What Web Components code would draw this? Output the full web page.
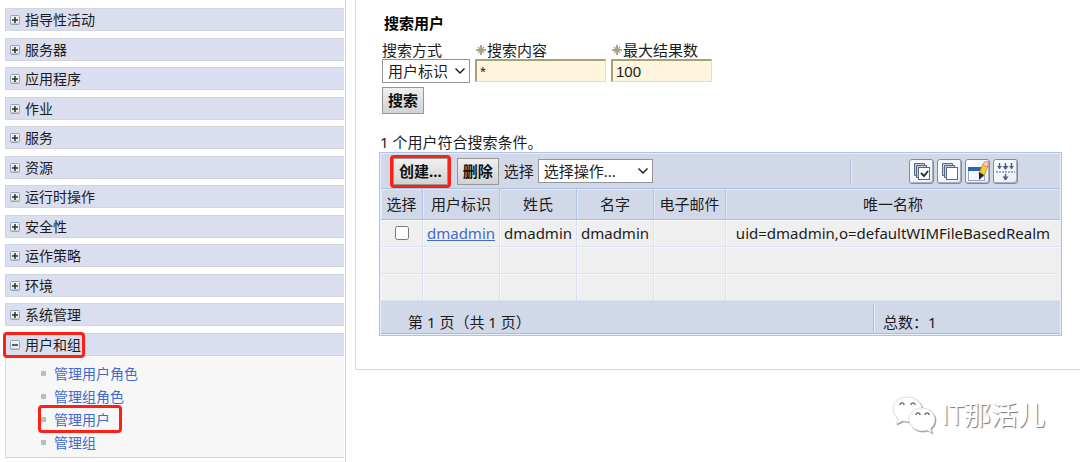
<!DOCTYPE html>
<html lang="zh-CN">
<head>
<meta charset="UTF-8">
<title>管理用户</title>
<style>
    body {
        margin: 0;
        background: #fff;
        color: #1c1c1c;
        font-family: "Noto Sans", "Noto Sans CJK SC", sans-serif;
        font-size: 15px;
    }
</style>
</head>
<body>
<console-page>
    <side-nav slot="nav">
        <nav-group label="指导性活动"></nav-group>
        <nav-group label="服务器"></nav-group>
        <nav-group label="应用程序"></nav-group>
        <nav-group label="作业"></nav-group>
        <nav-group label="服务"></nav-group>
        <nav-group label="资源"></nav-group>
        <nav-group label="运行时操作"></nav-group>
        <nav-group label="安全性"></nav-group>
        <nav-group label="运作策略"></nav-group>
        <nav-group label="环境"></nav-group>
        <nav-group label="系统管理"></nav-group>
        <nav-group label="用户和组" open marked>
            <nav-link>管理用户角色</nav-link>
            <nav-link>管理组角色</nav-link>
            <nav-link marked>管理用户</nav-link>
            <nav-link>管理组</nav-link>
        </nav-group>
    </side-nav>
    <search-form></search-form>
    <user-table></user-table>
    <page-watermark slot="watermark">IT那活儿</page-watermark>
</console-page>

<script>
// Общая база: создаёт открытый shadow root и вставляет разметку
class BaseElement extends HTMLElement {
    connectedCallback() {
        if (!this.shadowRoot) {
            this.attachShadow({ mode: 'open' });
        }
        this.shadowRoot.innerHTML = this.render();
    }
}

// Стили выпадающего списка, общие для формы и таблицы
const SELECT_STYLES = `
    .select {
        display: grid;
        align-items: center;
    }

    .select > * {
        grid-area: 1 / 1;
    }

    .select svg {
        justify-self: end;
        margin-right: 4px;
        pointer-events: none;
    }

    select {
        appearance: none;
        box-sizing: border-box;
        height: 24px;
        padding: 0 5px;
        border: 1px solid #959595;
        border-radius: 0;
        background: #fff;
        color: #1c1c1c;
        font: inherit;
        line-height: 22px;
    }
`;

const CHEVRON = `
    <svg width="12" height="8" viewBox="0 0 12 8" aria-hidden="true">
        <path d="M1.500 1.500L6 6l4.500-4.500" fill="none" stroke="#222" stroke-width="1.500"/>
    </svg>`;

// Каркас страницы
class ConsolePage extends BaseElement {
    render() {
        return `
            <style>
                :host {
                    display: grid;
                    grid-template-columns: 346px 1fr;
                    align-items: start;
                    min-height: 100vh;
                }

                aside {
                    box-sizing: border-box;
                    min-height: 100vh;
                    border-right: 1px solid #cfcfcf;
                }

                main {
                    margin-left: 9px;
                    padding: 14px 18px 33px 24px;
                    border-left: 1px solid #d8d8d8;
                    border-bottom: 1px solid #d8d8d8;
                }
            </style>
            <aside><slot name="nav"></slot></aside>
            <main><slot></slot></main>
            <slot name="watermark"></slot>
        `;
    }
}

// Боковое меню
class SideNav extends BaseElement {
    render() {
        return `
            <style>
                :host {
                    display: block;
                    padding: 8px 1px 3px 5px;
                    font-size: 14px;
                }

                ::slotted(nav-group) {
                    margin-bottom: 6px;
                }

                ::slotted(nav-group:nth-child(odd)) {
                    margin-bottom: 7px;
                }

                ::slotted(nav-group:last-child) {
                    margin-bottom: 0;
                }
            </style>
            <nav><slot></slot></nav>
        `;
    }
}

// Раздел меню
class NavGroup extends BaseElement {
    render() {
        const open = this.hasAttribute('open');
        const marked = this.hasAttribute('marked');

        return `
            <style>
                :host {
                    display: block;
                }

                button {
                    display: flex;
                    align-items: center;
                    box-sizing: border-box;
                    width: 100%;
                    height: 23px;
                    padding: 0 4px;
                    border: 1px solid #d3d5dc;
                    border-right: 0;
                    background: #dbdeee;
                    color: inherit;
                    font: inherit;
                    line-height: 20px;
                    text-align: left;
                }

                .caption {
                    position: relative;
                    display: flex;
                    align-items: center;
                    gap: 5px;
                }

                .caption.marked::after {
                    content: "";
                    position: absolute;
                    inset: -3px -4px -3px -7px;
                    border: 3px solid #fb2114;
                    border-radius: 4px;
                }

                ul {
                    margin: 0;
                    padding: 3px 0 6px 35px;
                    border-left: 1px solid #dedede;
                    border-bottom: 1px solid #d3d3d3;
                    background: #f7f7f7;
                    list-style: none;
                }
            </style>
            <button type="button" aria-expanded="${open}">
                <span class="caption ${marked ? 'marked' : ''}">
                    <svg width="10" height="10" viewBox="0 0 10 10">
                        <rect x=".5" y=".5" width="9" height="9" rx="1" fill="#eeeeea" stroke="#8ba6bf"/>
                        <path d="M1 8.5h8" stroke="#c9c9c4"/>
                        <path d="${open ? 'M2 5h6' : 'M2 5h6M5 2v6'}" stroke="#2f2f2f" stroke-width="1.5"/>
                    </svg>
                    ${this.getAttribute('label')}
                </span>
            </button>
            ${open ? '<ul><slot></slot></ul>' : ''}
        `;
    }
}

// Ссылка внутри раздела
class NavLink extends BaseElement {
    render() {
        return `
            <style>
                :host {
                    display: block;
                    height: 23px;
                    line-height: 23px;
                }

                .item {
                    position: relative;
                    display: inline-flex;
                    align-items: center;
                    gap: 8px;
                }

                .item::before {
                    content: "";
                    width: 5px;
                    height: 5px;
                    background: #bcbcbc;
                }

                :host([marked]) .item::after {
                    content: "";
                    position: absolute;
                    inset: -3px -12px -2px -3px;
                    border: 3px solid #fb2114;
                    border-radius: 4px;
                }

                a {
                    color: #426ace;
                    text-decoration: none;
                }
            </style>
            <li class="item" role="listitem"><a href="#"><slot></slot></a></li>
        `;
    }
}

// Серая кнопка
class ActionButton extends BaseElement {
    render() {
        return `
            <style>
                :host {
                    position: relative;
                    display: inline-block;
                }

                button {
                    display: block;
                    height: 27px;
                    padding: 0 5px;
                    border: 1px solid #979797;
                    background: linear-gradient(#f0f0f0, #d2d2d2);
                    color: #111;
                    font: inherit;
                    font-weight: bold;
                    line-height: 25px;
                }

                :host([marked])::after {
                    content: "";
                    position: absolute;
                    inset: -3px;
                    border: 3px solid #fb2114;
                    border-radius: 4px;
                }
            </style>
            <button type="button"><slot></slot></button>
        `;
    }
}

// Форма поиска
class SearchForm extends BaseElement {
    render() {
        const star = `
            <svg width="10" height="10" viewBox="0 0 10 10" aria-hidden="true">
                <path d="M5 0v10M0 5h10" stroke="#8d8964" stroke-width="1.500"/>
                <path d="M2 2l6 6M8 2L2 8" stroke="#a5a284" stroke-width="1.200"/>
            </svg>`;

        return `
            <style>
                ${SELECT_STYLES}

                :host {
                    display: block;
                    padding-left: 2px;
                }

                h2 {
                    margin: 0 0 9px 2px;
                    color: #000;
                    font-size: 15px;
                    line-height: 18px;
                }

                .fields {
                    display: flex;
                    gap: 5px;
                    margin-bottom: 4px;
                }

                .field {
                    display: flex;
                    flex-direction: column;
                }

                label {
                    display: flex;
                    align-items: center;
                    gap: 1px;
                    padding-left: 1px;
                    line-height: 18px;
                }

                .kind label {
                    padding-left: 0;
                }

                #kind {
                    width: 88px;
                }

                input {
                    box-sizing: border-box;
                    height: 23px;
                    padding: 0 3px;
                    border: 1px solid #dcdcdc;
                    border-top: 2px solid #a3a375;
                    border-left: 2px solid #a3a375;
                    border-radius: 0;
                    background: #fff5dc;
                    color: #1c1c1c;
                    font: 15px "Liberation Sans", sans-serif;
                }

                #text {
                    width: 131px;
                }

                #limit {
                    width: 101px;
                }
            </style>
            <h2>搜索用户</h2>
            <form>
                <div class="fields">
                    <div class="field kind">
                        <label for="kind">搜索方式</label>
                        <div class="select">
                            <select id="kind"><option>用户标识</option></select>
                            ${CHEVRON}
                        </div>
                    </div>
                    <div class="field">
                        <label for="text">${star}搜索内容</label>
                        <input id="text" type="text" value="*">
                    </div>
                    <div class="field">
                        <label for="limit">${star}最大结果数</label>
                        <input id="limit" type="text" value="100">
                    </div>
                </div>
                <action-button>搜索</action-button>
            </form>
        `;
    }
}

const TOOL_ICONS = {
    'select-all': `
        <path d="M5.500 16.500v-12h10v12z" fill="#c6cfe2" stroke="#566788"/>
        <path d="M7.500 18.500v-12h10v12z" fill="#c6cfe2" stroke="#566788"/>
        <rect x="9.500" y="8.500" width="11" height="12" fill="#fff" stroke="#566788"/>
        <path d="M12 14l3 3 4-5" fill="none" stroke="#26334e" stroke-width="2"/>`,
    'deselect-all': `
        <path d="M5.500 16.500v-12h10v12z" fill="#c6cfe2" stroke="#566788"/>
        <path d="M7.500 18.500v-12h10v12z" fill="#c6cfe2" stroke="#566788"/>
        <rect x="9.500" y="8.500" width="11" height="12" fill="#fff" stroke="#566788"/>`,
    'filter': `
        <rect x="3.500" y="8.500" width="16" height="13" fill="#f4f9ff" stroke="#93a8cc"/>
        <path d="M3 8h15v4H3z" fill="#2c62b7"/>
        <path d="M14 14l4-9 5 2-4 10-4 2z" fill="#f4cf26" stroke="#9b7d18" stroke-width=".6"/>
        <path d="M14 13l5 3-5 5z" fill="#222"/>
        <circle cx="21" cy="5" r="2.500" fill="#ffd5cd" stroke="#e78474"/>`,
    'clear-filter': `
        <path d="M6.500 4v6M12.500 4v6M18.500 4v6M12.500 15v6" stroke="#4c5f84" stroke-width="1.400"/>
        <path d="M4 7h5l-2.500 3zM9.500 7h6l-3 4zM16 7h5l-2.500 3zM9.500 17.500h6l-3 4z" fill="#4c5f84"/>
        <path d="M3 13h19" stroke="#4c5f84" stroke-dasharray="2 1"/>`
};

// Кнопка с иконкой на панели таблицы
class ToolButton extends BaseElement {
    render() {
        return `
            <style>
                :host {
                    display: block;
                }

                button {
                    display: block;
                    box-sizing: border-box;
                    width: 25px;
                    height: 25px;
                    padding: 0;
                    border: 1px solid #858b96;
                    border-radius: 3px;
                    background: linear-gradient(135deg, #fff, #e6edf8);
                    box-shadow: inset -1px -1px 0 #a9b0bd;
                }

                svg {
                    display: block;
                    margin: -1px;
                }
            </style>
            <button type="button" aria-label="${this.getAttribute('label')}">
                <svg width="25" height="25" viewBox="0 0 25 25">${TOOL_ICONS[this.getAttribute('icon')]}</svg>
            </button>
        `;
    }
}

// Таблица найденных пользователей
class UserTable extends BaseElement {
    render() {
        return `
            <style>
                ${SELECT_STYLES}

                :host {
                    display: block;
                    margin-top: 18px;
                }

                p {
                    margin: 0;
                    line-height: 20px;
                }

                .frame {
                    margin-left: -1px;
                    border: 1px solid #b0c4e8;
                    box-shadow: inset 0 0 0 1px #e6edf8;
                    padding: 1px;
                }

                .toolbar {
                    display: flex;
                    align-items: center;
                    height: 34px;
                    padding-left: 12px;
                    padding-right: 42px;
                    background: #d1d8e8;
                }

                .toolbar label {
                    margin: 0 4px 0 5px;
                    line-height: 20px;
                }

                .toolbar action-button + action-button {
                    margin-left: 9px;
                }

                #action {
                    width: 115px;
                }

                .tools {
                    display: flex;
                    gap: 3px;
                    margin-left: auto;
                    padding-left: 58px;
                    border-left: 1px solid #a9bbd8;
                    box-shadow: inset 1px 0 0 #e8eef8;
                }

                table {
                    width: 100%;
                    border-spacing: 0;
                    table-layout: fixed;
                }

                th,
                td {
                    box-sizing: border-box;
                    padding: 0;
                    text-align: center;
                    white-space: nowrap;
                    font-weight: normal;
                    line-height: 20px;
                }

                th {
                    height: 32px;
                    background: #d1d8e8;
                    border-top: 1px solid #a9bfe6;
                    border-right: 1px solid #b3c5e6;
                    border-bottom: 1px solid #a9bfe0;
                    box-shadow: inset 1px 1px 0 #e2e9f5;
                }

                td {
                    height: 27px;
                    background: #efefef;
                    border-right: 1px solid #d9e0f0;
                    border-bottom: 1px solid #dde2f0;
                    box-shadow: inset 1px 1px 0 #f7f7f9;
                }

                th:last-child,
                td:last-child {
                    border-right: 0;
                }

                input {
                    display: block;
                    width: 14px;
                    height: 14px;
                    margin: 0 auto;
                }

                a {
                    color: #426ace;
                }

                .check {
                    width: 42px;
                }

                .name {
                    width: 77px;
                }

                .mail {
                    width: 72px;
                }

                .footer {
                    display: flex;
                    align-items: center;
                    justify-content: space-between;
                    box-sizing: border-box;
                    height: 33px;
                    padding-left: 27px;
                    background: #d1d8e8;
                    border-bottom: 1px solid #a9c0dc;
                    line-height: 20px;
                }

                .footer span:first-child {
                    padding-top: 10px;
                }

                .total {
                    box-sizing: border-box;
                    width: 187px;
                    height: 27px;
                    padding: 8px 0 0 9px;
                    border-left: 1px solid #a9bbd8;
                    box-shadow: inset 1px 0 0 #e8eef8;
                }
            </style>
            <p>1 个用户符合搜索条件。</p>
            <div class="frame">
                <div class="toolbar">
                    <action-button marked>创建...</action-button>
                    <action-button>删除</action-button>
                    <label for="action">选择</label>
                    <div class="select">
                        <select id="action"><option>选择操作...</option></select>
                        ${CHEVRON}
                    </div>
                    <div class="tools">
                        <tool-button icon="select-all" label="全选"></tool-button>
                        <tool-button icon="deselect-all" label="取消全选"></tool-button>
                        <tool-button icon="filter" label="显示过滤器"></tool-button>
                        <tool-button icon="clear-filter" label="清除过滤器"></tool-button>
                    </div>
                </div>
                <table>
                    <colgroup>
                        <col class="check"><col class="name"><col class="name"><col class="name"><col class="mail"><col>
                    </colgroup>
                    <thead>
                        <tr><th>选择</th><th>用户标识</th><th>姓氏</th><th>名字</th><th>电子邮件</th><th>唯一名称</th></tr>
                    </thead>
                    <tbody>
                        <tr>
                            <td><input type="checkbox" aria-label="dmadmin"></td>
                            <td><a href="#">dmadmin</a></td>
                            <td>dmadmin</td>
                            <td>dmadmin</td>
                            <td></td>
                            <td>uid=dmadmin,o=defaultWIMFileBasedRealm</td>
                        </tr>
                        <tr><td></td><td></td><td></td><td></td><td></td><td></td></tr>
                        <tr><td></td><td></td><td></td><td></td><td></td><td></td></tr>
                    </tbody>
                </table>
                <div class="footer">
                    <span>第 1 页（共 1 页）</span>
                    <span class="total">总数：1</span>
                </div>
            </div>
        `;
    }
}

// Водяной знак поверх страницы
class PageWatermark extends BaseElement {
    render() {
        return `
            <style>
                :host {
                    position: absolute;
                    right: 35px;
                    bottom: 27px;
                    display: flex;
                    align-items: center;
                    gap: 6px;
                    color: #fff;
                    font-family: "Open Sans", "Noto Sans CJK SC", sans-serif;
                    font-size: 27px;
                    line-height: 40px;
                    text-shadow: 1px 1px 1px #777;
                }

                svg {
                    filter: drop-shadow(1px 1px 0 #999);
                }
            </style>
            <svg width="44" height="38" viewBox="0 0 44 38" fill="#fff" stroke="#c8c8c8" stroke-width=".6">
                <path d="M15 1C7 1 1 6 1 13c0 4 2 7 5 9.500L4.500 28l6-3c2 .6 4 .8 6.500 .8C25 25.500 30 20 30 13 30 6 23 1 15 1z"/>
                <path d="M30 12c-7 0-13 5-13 11.500S23 35 30 35c2 0 3.500-.3 5-.8l5 2.800-1.300-4.500c2.500-2 4.300-5 4.300-9C43 17 37 12 30 12z"/>
                <path d="M8 9a2 2 0 0 1 4 0M19 9a2 2 0 0 1 4 0M24 19a2 2 0 0 1 4 0M33 19a2 2 0 0 1 4 0" fill="none" stroke="#777" stroke-width="1.500"/>
            </svg>
            <slot></slot>
        `;
    }
}

// Регистрация компонентов
customElements.define('console-page', ConsolePage);
customElements.define('side-nav', SideNav);
customElements.define('nav-group', NavGroup);
customElements.define('nav-link', NavLink);
customElements.define('action-button', ActionButton);
customElements.define('tool-button', ToolButton);
customElements.define('search-form', SearchForm);
customElements.define('user-table', UserTable);
customElements.define('page-watermark', PageWatermark);
</script>
</body>
</html>
